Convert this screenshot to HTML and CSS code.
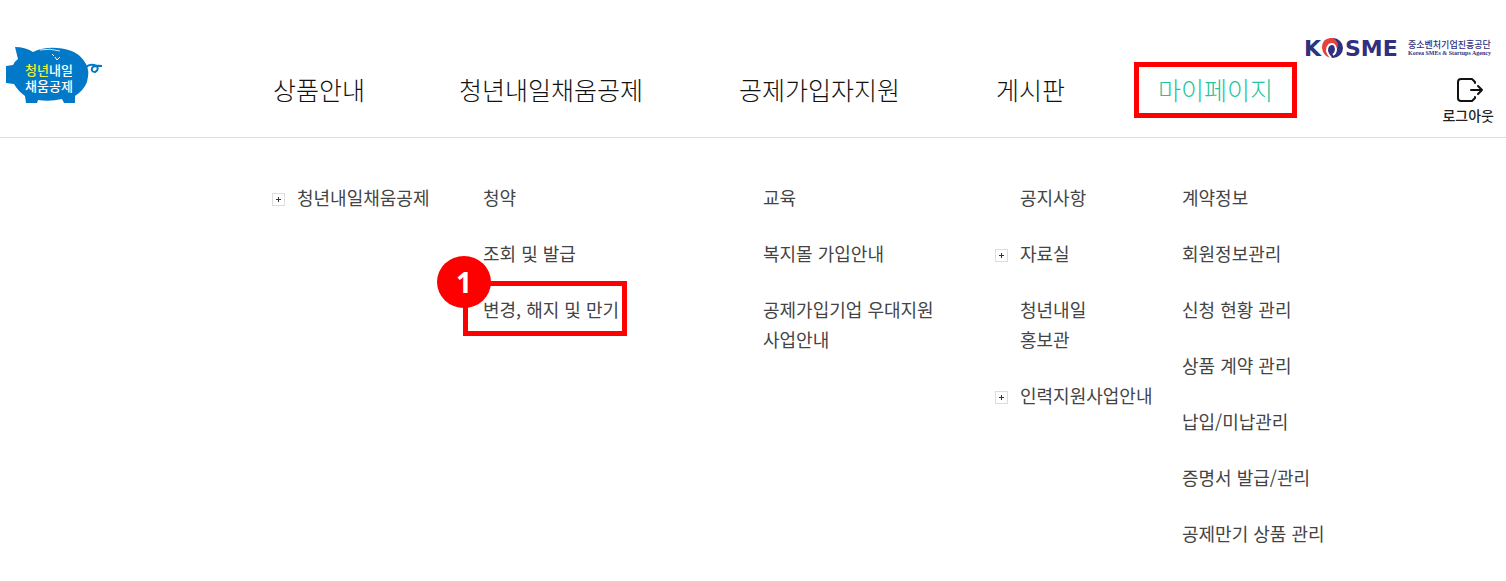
FILE: index.html
```html
<!DOCTYPE html>
<html lang="ko">
<head>
    <meta charset="UTF-8">
    <meta name="viewport" content="width=device-width, initial-scale=1.0">
    <title>청년내일채움공제</title>
    <link rel="stylesheet" href="styles.css">
</head>
<body>
    <header class="site-header">
        <div class="brand">
            <a href="#" aria-label="청년내일채움공제">
                <svg class="pig" width="104" height="60" viewBox="0 0 104 60">
                    <path fill="#0279c8" d="M15 2 Q25 2 33 7 Q44 2 57 3 Q78 4 86 19 Q90 25 87 37 Q84 45 75 51 L75 58 L64 58 L62 54 Q50 57 38 55 L37 58 L26 58 L25 51 Q18 46 14 39 L6 38 L6 21 L13 20 Q15 16 18 14 Z"/>
                    <path fill="none" stroke="#0279c8" stroke-width="2" d="M86 22 Q90 18 97 21 Q99 25 95 27 Q91 27 92 23 Q94 20 102 21"/>
                    <path fill="none" stroke="#cfe8f8" stroke-width="1" d="M40 5 Q50 3 60 6"/>
                    <path fill="none" stroke="#fff" stroke-width="1" d="M52 9 l2 2 M55 12 l2 3 3 -3"/>
                    <text class="pig-text" x="25" y="30"><tspan fill="#e6f23c">청년</tspan>내일</text>
                    <text class="pig-text" x="25" y="46">채움공제</text>
                </svg>
            </a>
        </div>
        <nav>
            <ul class="gnb">
                <li>
                    <div class="top"><a href="#">상품안내</a></div>
                    <ul class="sub">
                        <li class="more"><a href="#">청년내일채움공제</a></li>
                    </ul>
                </li>
                <li>
                    <div class="top"><a href="#">청년내일채움공제</a></div>
                    <ul class="sub">
                        <li><a href="#">청약</a></li>
                        <li><a href="#">조회 및 발급</a></li>
                        <li><a href="#" class="marked step">변경, 해지 및 만기<span class="badge">1</span></a></li>
                    </ul>
                </li>
                <li>
                    <div class="top"><a href="#">공제가입자지원</a></div>
                    <ul class="sub">
                        <li><a href="#">교육</a></li>
                        <li><a href="#">복지몰 가입안내</a></li>
                        <li><a href="#">공제가입기업 우대지원<br>사업안내</a></li>
                    </ul>
                </li>
                <li>
                    <div class="top"><a href="#">게시판</a></div>
                    <ul class="sub">
                        <li><a href="#">공지사항</a></li>
                        <li class="more"><a href="#">자료실</a></li>
                        <li><a href="#">청년내일<br>홍보관</a></li>
                        <li class="more"><a href="#">인력지원사업안내</a></li>
                    </ul>
                </li>
                <li>
                    <div class="top"><a href="#" class="marked active">마이페이지</a></div>
                    <ul class="sub">
                        <li><a href="#">계약정보</a></li>
                        <li><a href="#">회원정보관리</a></li>
                        <li><a href="#">신청 현황 관리</a></li>
                        <li><a href="#">상품 계약 관리</a></li>
                        <li><a href="#">납입/미납관리</a></li>
                        <li><a href="#">증명서 발급/관리</a></li>
                        <li><a href="#">공제만기 상품 관리</a></li>
                    </ul>
                </li>
            </ul>
        </nav>
        <div class="util">
            <a href="#" aria-label="KOSME">
                <svg width="190" height="24" viewBox="0 0 190 24">
                    <text class="kosme" x="0" y="19">K</text>
                    <circle cx="29" cy="11" r="10" fill="#302f80"/>
                    <path fill="#e8403a" d="M29 1 Q18 0 18 11 Q19 19 27 21 Q20 13 25 8 Q31 5 33 12 Q36 5 29 1 Z"/>
                    <path fill="none" stroke="#fff" stroke-width="2" d="M27 21 Q20 13 25 8 Q31 5 32 12 Q32 16 29 18"/>
                    <text class="kosme" x="41" y="19">SME</text>
                    <text class="kosme-ko" x="104" y="11">중소벤처기업진흥공단</text>
                    <text class="kosme-en" x="104" y="18">Korea SMEs &amp; Startups Agency</text>
                </svg>
            </a>
            <a href="#" class="logout">
                <svg width="32" height="26" viewBox="-4 0 32 26" fill="none" stroke="#111" stroke-width="2" stroke-linejoin="round" stroke-linecap="round">
                    <path d="M19 6 V5 L16 2 H5 Q2 2 2 5 V21 Q2 24 5 24 H16 L19 21 V20"/>
                    <path d="M15 13 H26 M22 9 L26 13 L22 17"/>
                </svg>
                로그아웃
            </a>
        </div>
    </header>
</body>
</html>
```
FILE: styles.css
```css
* {
    box-sizing: border-box;
}
body {
    margin: 0;
    background-color: #fff;
    color: #444;
    font-family: "Noto Sans CJK KR", sans-serif;
    font-size: 18px;
    line-height: 30px;
}
ul {
    list-style: none;
    margin: 0;
    padding: 0;
}
a {
    color: inherit;
    text-decoration: none;
}
svg {
    display: block;
}
.site-header {
    display: grid;
    grid-template-columns: 273px 1fr 202px;
    align-items: start;
}
.brand,
.top,
.util {
    height: 138px;
    border-bottom: 1px solid #ddd;
}
.brand {
    padding-top: 45px;
}
.pig-text {
    font-size: 13px;
    font-weight: 500;
    fill: #fff;
}
.gnb {
    display: grid;
    grid-template-columns: 186fr 280fr 257fr 162fr 146fr;
    font-weight: 300;
    white-space: nowrap;
}
.gnb > li {
    min-width: 0;
}
.top {
    padding-top: 71px;
    color: #111;
    font-size: 25px;
    line-height: 36px;
}
.top a {
    display: inline-block;
}
.top .active {
    color: #1fc5a0;
}
.sub {
    display: flex;
    flex-direction: column;
    gap: 26px;
    padding: 44px 0 30px 24px;
    font-weight: 400;
}
.sub li {
    position: relative;
}
.sub a {
    display: inline-block;
}
/* plus box in front of items with a submenu */
.more::before {
    content: "";
    position: absolute;
    left: -25px;
    top: 11px;
    width: 11px;
    height: 11px;
    border: 1px solid #ddd;
    background:
        linear-gradient(#333, #333) center / 5px 1px no-repeat,
        linear-gradient(#333, #333) center / 1px 5px no-repeat;
}
/* red guide box */
.marked {
    position: relative;
}
.marked::before {
    content: "";
    position: absolute;
    inset: -9px -24px -11px;
    border: 5px solid #f00;
}
.step::before {
    inset: -13px -8px -12px -20px;
}
.badge {
    position: absolute;
    left: -46px;
    top: -38px;
    width: 54px;
    height: 52px;
    border-radius: 50%;
    background-color: #f00;
    color: #fff;
    font-family: "Noto Sans", sans-serif;
    font-size: 28px;
    font-weight: 700;
    line-height: 52px;
    text-align: center;
}
.util {
    padding: 37px 12px 0 0;
    display: flex;
    flex-direction: column;
    align-items: flex-end;
    gap: 16px;
}
.kosme {
    font-family: "DejaVu Sans", sans-serif;
    font-size: 22px;
    font-weight: 700;
    fill: #302f80;
}
.kosme-ko {
    font-size: 9px;
    font-weight: 500;
    fill: #302f80;
}
.kosme-en {
    font-family: "Liberation Serif", serif;
    font-size: 6px;
    font-weight: 700;
    fill: #302f80;
}
.logout {
    display: flex;
    flex-direction: column;
    align-items: center;
    color: #222;
    font-size: 14px;
    font-weight: 500;
    line-height: 24px;
}
```
